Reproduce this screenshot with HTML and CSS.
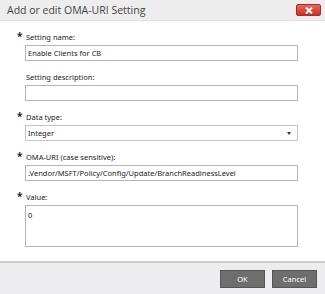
FILE: index.html
```html
<!DOCTYPE html>
<html>
<head>
<meta charset="utf-8">
<link rel="stylesheet" href="styles.css">
</head>
<body>
<div class="dialog">
  <div class="titlebar">
    <span class="title">Add or edit OMA-URI Setting</span>
    <span class="close"><svg width="8" height="7" viewBox="0 0 8 7"><path d="M1 0.5 L7 6.5 M7 0.5 L1 6.5" stroke="#fff" stroke-width="2"/></svg></span>
  </div>
  <div class="content">
    <div class="field">
      <div class="label"><span class="req">*</span>Setting name:</div>
      <div class="input">Enable Clients for CB</div>
    </div>
    <div class="field">
      <div class="label"><span class="req"></span>Setting description:</div>
      <div class="input"></div>
    </div>
    <div class="field">
      <div class="label"><span class="req">*</span>Data type:</div>
      <div class="input select">Integer<span class="arrow"></span></div>
    </div>
    <div class="field">
      <div class="label"><span class="req">*</span>OMA-URI (case sensitive):</div>
      <div class="input">.Vendor/MSFT/Policy/Config/Update/BranchReadinessLevel</div>
    </div>
    <div class="field">
      <div class="label"><span class="req">*</span>Value:</div>
      <div class="input textarea">0</div>
    </div>
  </div>
  <div class="footer">
    <button class="btn">OK</button>
    <button class="btn">Cancel</button>
  </div>
</div>
</body>
</html>
```

FILE: styles.css
```css
html, body { margin: 0; padding: 0; background: #fff; }
.dialog {
  width: 325px;
  height: 294px;
  display: flex;
  flex-direction: column;
  font-family: "Noto Sans", sans-serif;
  color: #222;
  box-sizing: border-box;
}
.titlebar {
  height: 21px;
  background: #ededed;
  border-bottom: 1px solid #e2e2e2;
  display: flex;
  align-items: center;
  justify-content: space-between;
  padding: 0 4px 0 7px;
  box-sizing: border-box;
}
.title {
  font-family: "Open Sans", sans-serif;
  font-size: 10.5px;
  color: #444;
}
.close {
  width: 25px;
  height: 12px;
  background: linear-gradient(#e8675c, #c9322a);
  border: 1px solid #b02a22;
  border-radius: 2px;
  display: flex;
  align-items: center;
  justify-content: center;
  box-sizing: border-box;
}
.content {
  flex: 1;
  padding: 8px 27px 0 17px;
  display: flex;
  flex-direction: column;
  gap: 8px;
}
.field { display: flex; flex-direction: column; }
.label {
  font-size: 7.5px;
  height: 16px;
  display: flex;
  align-items: center;
  color: #222;
}
.req {
  width: 9px;
  font-weight: bold;
  font-size: 10px;
  align-self: flex-start;
  margin-top: 0;
}
.input {
  margin-left: 8px;
  height: 16px;
  border: 1px solid #b3b6bd;
  box-sizing: border-box;
  font-size: 7.5px;
  padding: 0 2px;
  display: flex;
  align-items: center;
  color: #222;
  white-space: nowrap;
}
.select { justify-content: space-between; border-color: #c4c4c4; }
.arrow {
  width: 0; height: 0;
  border-left: 2.5px solid transparent;
  border-right: 2.5px solid transparent;
  border-top: 3px solid #333;
  margin-right: 4px;
}
.textarea { height: 42px; align-items: flex-start; padding-top: 4px; }
.footer {
  height: 31px;
  background: #ededf0;
  border-top: 2px solid #cbcbd0;
  display: flex;
  justify-content: flex-end;
  align-items: center;
  gap: 7px;
  padding: 0 8px 0 0;
}
.btn {
  width: 45px;
  height: 18px;
  background: #6e6e6e;
  border: 1px solid #555;
  color: #fff;
  font-family: "Noto Sans", sans-serif;
  font-size: 7.5px;
  padding: 0;
}
```
